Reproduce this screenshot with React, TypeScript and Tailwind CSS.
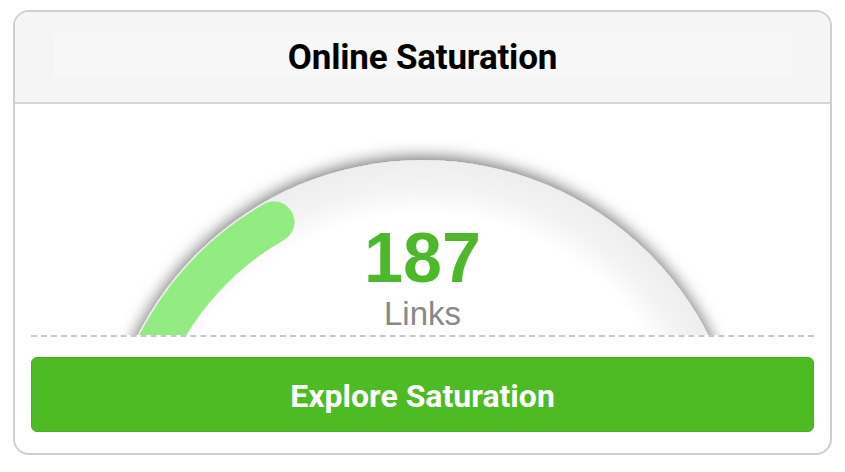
import React from "react"

const CX = 408
const CY = 376
const R = 320
const ARC_R = 298

function arcPoint(deg: number) {
  const a = (deg * Math.PI) / 180
  return { x: CX - ARC_R * Math.cos(a), y: CY - ARC_R * Math.sin(a) }
}

function Gauge({ angle }: { angle: number }) {
  const start = arcPoint(0)
  const end = arcPoint(angle)
  return (
    <svg width="815" height="231" viewBox="0 0 815 231" className="block">
      <defs>
        <radialGradient id="face" cx={CX} cy={CY} r={R} gradientUnits="userSpaceOnUse">
          <stop offset="0.83" stopColor="#ffffff" />
          <stop offset="0.92" stopColor="#f3f3f3" />
          <stop offset="1" stopColor="#eeeeee" />
        </radialGradient>
        <filter id="shade" x="-20%" y="-20%" width="140%" height="140%">
          <feDropShadow dx="0" dy="-3" stdDeviation="8" floodColor="#000" floodOpacity="0.55" />
        </filter>
      </defs>
      <circle cx={CX} cy={CY} r={R} fill="url(#face)" filter="url(#shade)" />
      <path
        d={`M ${start.x} ${start.y} A ${ARC_R} ${ARC_R} 0 0 1 ${end.x} ${end.y}`}
        fill="none"
        stroke="#92ec82"
        strokeWidth="41"
        strokeLinecap="round"
      />
    </svg>
  )
}

export default function App() {
  return (
    <div className="min-h-[472px] bg-white pt-[10px] pl-[13px]">
      <div className="w-[819px] h-[445px] rounded-[16px] border-2 border-[#cfcfcf] overflow-hidden flex flex-col">
        <div className="h-[92px] bg-[#f5f5f6] border-b-2 border-[#d6d6d6] pt-[21px] px-[38px]">
          <div className="h-[45px] bg-[#f7f7f8] flex items-center justify-center">
            <h1 className="font-['Roboto',sans-serif] font-bold text-[35px] leading-none text-black tracking-[-0.2px] pt-[4px]">
              Online Saturation
            </h1>
          </div>
        </div>

        <div className="relative h-[231px] overflow-hidden">
          <Gauge angle={60} />
          <div className="absolute inset-x-0 top-[119px] flex flex-col items-center font-['Liberation_Sans',Arial,sans-serif]">
            <span className="text-[70px] font-bold leading-none text-[#4cb82a]">187</span>
            <span className="text-[33px] leading-none mt-[4px] text-[#888888]">Links</span>
          </div>
        </div>

        <div className="mx-4 border-t-2 border-dashed border-[#c8c8c8]" />

        <button className="mx-4 mt-[20px] h-[75px] rounded-[6px] bg-[#4dbb23] border border-[#47ae20] flex items-center justify-center">
          <span className="font-['Roboto',sans-serif] font-bold text-[32px] leading-none text-white pt-[2px]">
            Explore Saturation
          </span>
        </button>
      </div>
    </div>
  )
}
